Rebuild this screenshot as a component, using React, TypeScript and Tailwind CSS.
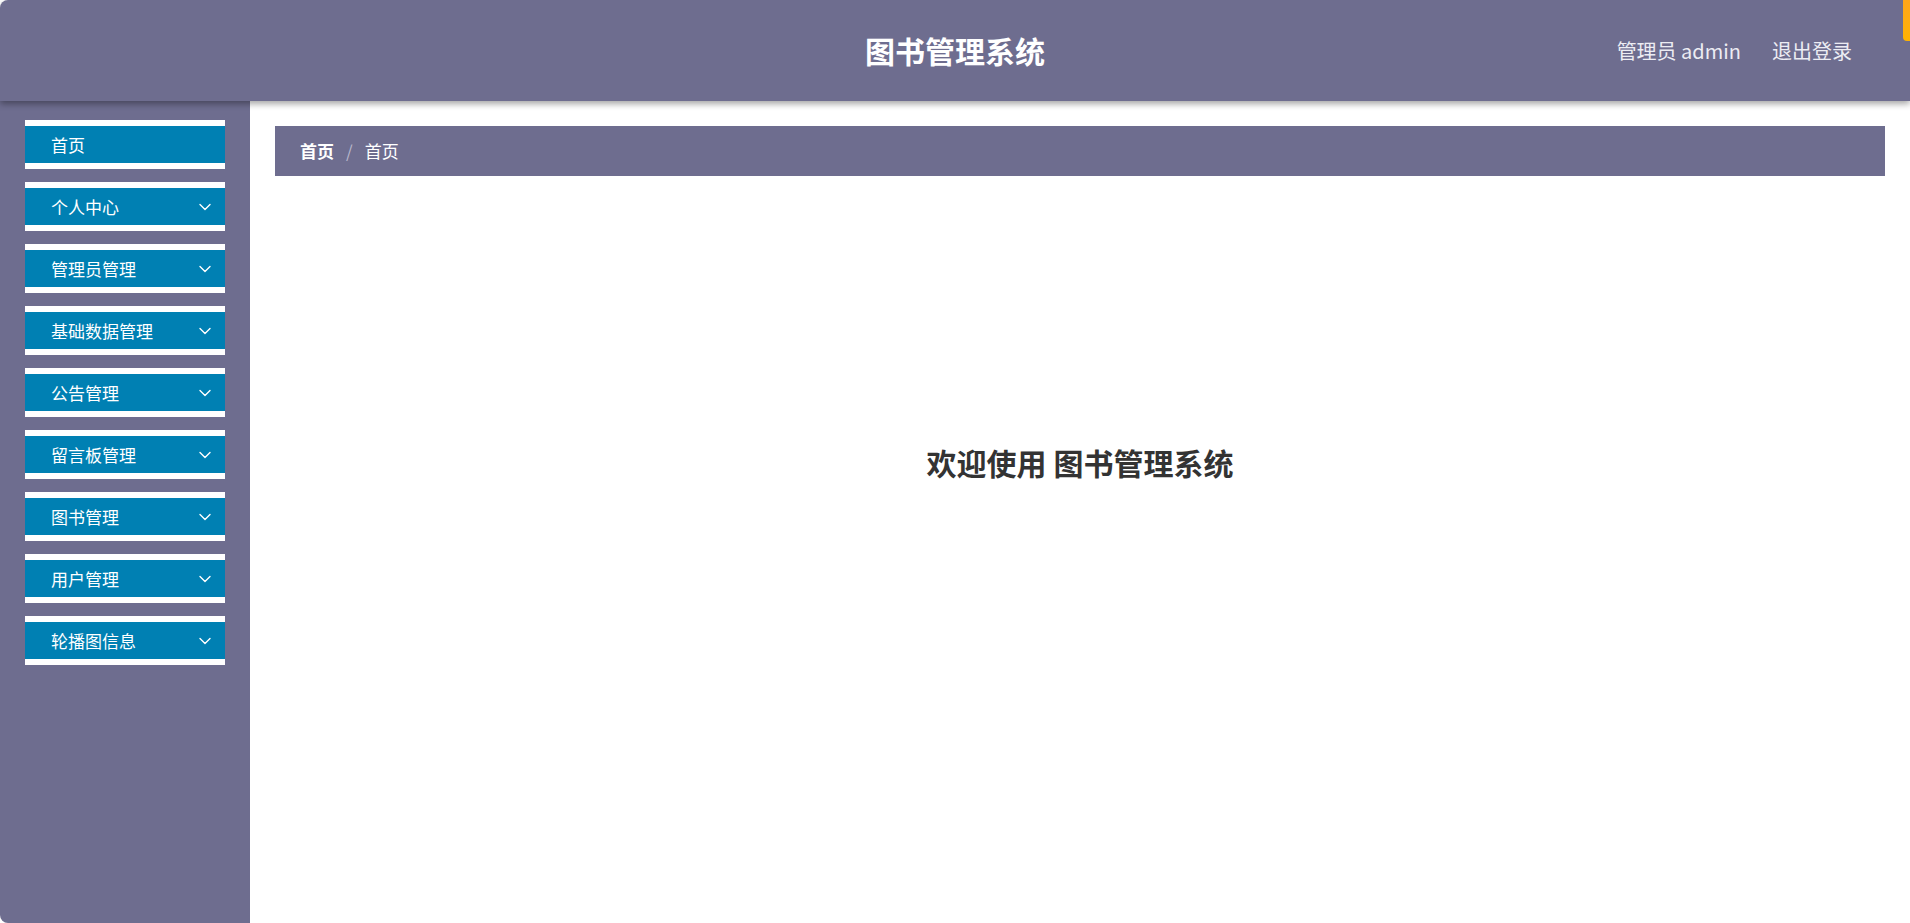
const menus = [
  { title: "首页", sub: false },
  { title: "个人中心", sub: true },
  { title: "管理员管理", sub: true },
  { title: "基础数据管理", sub: true },
  { title: "公告管理", sub: true },
  { title: "留言板管理", sub: true },
  { title: "图书管理", sub: true },
  { title: "用户管理", sub: true },
  { title: "轮播图信息", sub: true },
];

// small down arrow used on the collapsible menu groups
function Arrow() {
  return (
    <svg width="12" height="8" viewBox="0 0 12 8" fill="none">
      <path
        d="M1 1.5 6 6.5 11 1.5"
        stroke="currentColor"
        strokeWidth="1.4"
        strokeLinecap="round"
        strokeLinejoin="round"
      />
    </svg>
  );
}

export default function App() {
  return (
    <div
      className="relative flex h-[923px] flex-col overflow-hidden bg-white"
      style={{ fontFamily: '"Noto Sans CJK SC", "Noto Sans", sans-serif' }}
    >
      {/* Top bar */}
      <header className="relative z-10 flex h-[101px] shrink-0 items-center justify-center rounded-tl-[8px] bg-[#6e6d8f] shadow-[0_3px_6px_rgba(0,0,0,0.35)]">
        <h1 className="text-[30px] font-bold text-white">图书管理系统</h1>
        <div className="absolute right-[58px] top-0 flex h-full items-center gap-[31px] text-[20px] text-[#ececf3]">
          <span>管理员 admin</span>
          <span>退出登录</span>
        </div>
        <div className="absolute right-0 top-0 h-[41px] w-[7px] rounded-bl-[4px] bg-gradient-to-b from-[#ffa51a] to-[#ffb300]" />
      </header>

      <div className="flex min-h-0 flex-1">
        {/* Side menu */}
        <aside className="w-[250px] shrink-0 rounded-bl-[8px] bg-[#6e6d8f] px-[25px] pt-[19px]">
          <ul className="flex flex-col gap-[13px]">
            {menus.map((m) => (
              <li
                key={m.title}
                className="flex h-[49px] items-center justify-between border-y-[6px] border-white bg-[#0080b3] pl-[26px] pr-[14px] text-[17px] text-white"
              >
                <span>{m.title}</span>
                {m.sub && <Arrow />}
              </li>
            ))}
          </ul>
        </aside>

        {/* Main area */}
        <main className="flex-1 px-[25px] pt-[25px]">
          <div className="flex h-[50px] items-center bg-[#6e6d8f] px-[25px] text-[17px] text-white">
            <span className="font-bold">首页</span>
            <span className="mx-[12px] text-[#b8b7cc]">/</span>
            <span>首页</span>
          </div>
          <div className="mt-[264px] text-center text-[30px] font-bold text-[#333]">
            欢迎使用 图书管理系统
          </div>
        </main>
      </div>
    </div>
  );
}
